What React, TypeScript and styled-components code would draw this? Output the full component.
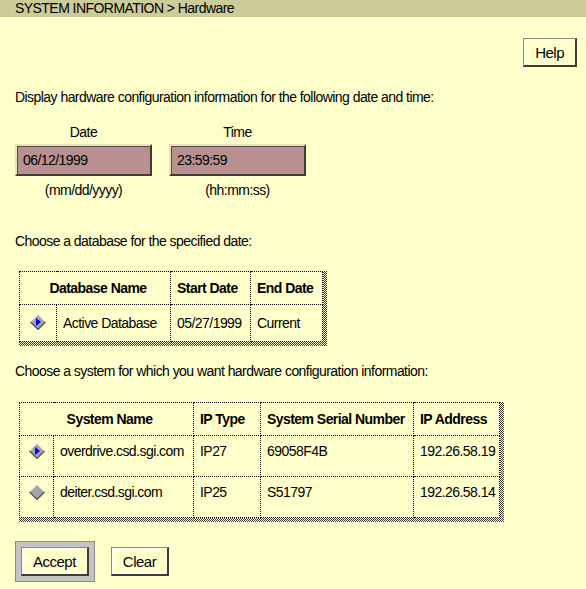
import React from "react";
import styled, { createGlobalStyle } from "styled-components";

const GlobalStyle = createGlobalStyle`
	html, body {
		margin: 0;
		padding: 0;
		background-color: #ffffcc;
	}
	body {
		font-family: "Liberation Sans", Arial, sans-serif;
		font-size: 14px;
		letter-spacing: -0.55px;
		color: #000;
	}
`;

const Page = styled.div`
	width: 586px;
	min-height: 589px;
	background-color: #ffffcc;
`;

const TitleBar = styled.header`
	height: 17px;
	padding-left: 15px;
	background-color: #cccc99;
	font-size: 14px;
	line-height: 17px;
	white-space: nowrap;
`;

const Content = styled.main`
	display: flex;
	flex-direction: column;
	align-items: flex-start;
	padding: 0 9px 0 15px;
`;

const HelpRow = styled.div`
	display: flex;
	justify-content: flex-end;
	align-self: stretch;
	margin-top: 21px;
`;

const Button = styled.button`
	height: 29px;
	padding: 0 11px;
	background-color: #ffffcc;
	border-style: solid;
	border-width: 1px 2px 2px 1px;
	border-color: #8a8a7a #3c3c3c #3c3c3c #8a8a7a;
	box-shadow: inset 1px 1px 0 #ffffff;
	font-family: inherit;
	font-size: 15px;
	letter-spacing: -0.5px;
	color: #000;
	cursor: pointer;
`;

const Prompt = styled.p<{ $top: number }>`
	margin: ${({ $top }) => $top}px 0 0;
	line-height: 18px;
	white-space: nowrap;
`;

const FieldRow = styled.div`
	display: flex;
	gap: 17px;
	margin-top: 17px;
`;

const FieldGroup = styled.div`
	display: flex;
	flex-direction: column;
	align-items: center;
`;

const FieldLabel = styled.label`
	line-height: 18px;
	margin-bottom: 3px;
`;

const FieldInput = styled.input`
	box-sizing: border-box;
	width: 137px;
	height: 32px;
	padding: 0 0 0 6px;
	background-color: #b89090;
	border-style: solid;
	border-width: 2px;
	border-color: #e4e4b4 #3c3c3c #3c3c3c #e4e4b4;
	box-shadow: inset 1px 1px 0 #5a4a4a;
	font-family: inherit;
	font-size: 14px;
	letter-spacing: -0.55px;
	color: #000;
	outline: none;
`;

const FieldHint = styled.span`
	margin-top: 5px;
	line-height: 18px;
`;

const TableFrame = styled.div<{ $top: number }>`
	margin: ${({ $top }) => $top}px 0 0 4px;
	padding: 0 4px 4px 0;
	background: repeating-conic-gradient(#3a3a3a 0% 25%, #ffffcc 0% 50%) 0 0 / 2px 2px;
`;

const Table = styled.table`
	border-collapse: collapse;
	table-layout: fixed;
	background-color: #ffffcc;
	border: 1px dotted #000;
`;

const HeadCell = styled.th<{ $center?: boolean }>`
	height: 32px;
	padding: 0 0 0 6px;
	border: 1px dotted #000;
	font-weight: bold;
	text-align: ${({ $center }) => ($center ? "center" : "left")};
	white-space: nowrap;
`;

const Cell = styled.td<{ $tall?: boolean }>`
	height: ${({ $tall }) => ($tall ? 41 : 37)}px;
	padding: ${({ $tall }) => ($tall ? "7px" : "0")} 0 0 6px;
	border: 1px dotted #000;
	vertical-align: ${({ $tall }) => ($tall ? "top" : "middle")};
	white-space: nowrap;
	box-sizing: border-box;
`;

const RadioCell = styled(Cell)`
	padding-left: 0;
	text-align: center;
`;

const RadioButton = styled.button`
	display: inline-flex;
	padding: 0;
	margin: 0;
	border: none;
	background: none;
	cursor: pointer;
`;

const ButtonRow = styled.div`
	display: flex;
	align-items: center;
	gap: 16px;
	margin-top: 19px;
`;

const DefaultFrame = styled.div`
	display: flex;
	padding: 5px;
	background-color: #c4c4c4;
	border: 1px solid #8c8c8c;
`;

const Diamond = ({ selected }: { selected: boolean }) => (
	<svg width="16" height="16" viewBox="0 0 16 16">
		<polygon points="8,0.5 15.5,8 8,15.5 0.5,8" fill="#a4a4a4" />
		<polyline points="0.5,8 8,0.5 15.5,8" fill="none" stroke="#f0f0f0" strokeWidth="1" />
		<polyline points="15.5,8 8,15.5 0.5,8" fill="none" stroke="#505050" strokeWidth="1.2" />
		{selected && <polygon points="6,4 11,8 6,12" fill="#0000ff" />}
	</svg>
);

const databases = [{ name: "Active Database", start: "05/27/1999", end: "Current" }];

const systems = [
	{ name: "overdrive.csd.sgi.com", type: "IP27", serial: "69058F4B", ip: "192.26.58.19" },
	{ name: "deiter.csd.sgi.com", type: "IP25", serial: "S51797", ip: "192.26.58.14" }
];

const App = () => {
	const [dbIndex, setDbIndex] = React.useState(0);
	const [sysIndex, setSysIndex] = React.useState(0);

	return (
		<Page>
			<GlobalStyle />
			<TitleBar>SYSTEM INFORMATION &gt; Hardware</TitleBar>
			<Content>
				<HelpRow>
					<Button>Help</Button>
				</HelpRow>
				<Prompt $top={21}>Display hardware configuration information for the following date and time:</Prompt>
				<FieldRow>
					<FieldGroup>
						<FieldLabel>Date</FieldLabel>
						<FieldInput defaultValue="06/12/1999" />
						<FieldHint>(mm/dd/yyyy)</FieldHint>
					</FieldGroup>
					<FieldGroup>
						<FieldLabel>Time</FieldLabel>
						<FieldInput defaultValue="23:59:59" />
						<FieldHint>(hh:mm:ss)</FieldHint>
					</FieldGroup>
				</FieldRow>

				<Prompt $top={33}>Choose a database for the specified date:</Prompt>
				<TableFrame $top={21}>
					<Table style={{ width: 304 }}>
						<colgroup>
							<col style={{ width: 37 }} />
							<col style={{ width: 114 }} />
							<col style={{ width: 80 }} />
							<col style={{ width: 72 }} />
						</colgroup>
						<thead>
							<tr>
								<HeadCell colSpan={2} $center>
									Database Name
								</HeadCell>
								<HeadCell>Start Date</HeadCell>
								<HeadCell>End Date</HeadCell>
							</tr>
						</thead>
						<tbody>
							{databases.map((db, i) => (
								<tr key={db.name}>
									<RadioCell>
										<RadioButton onClick={() => setDbIndex(i)}>
											<Diamond selected={dbIndex === i} />
										</RadioButton>
									</RadioCell>
									<Cell>{db.name}</Cell>
									<Cell>{db.start}</Cell>
									<Cell>{db.end}</Cell>
								</tr>
							))}
						</tbody>
					</Table>
				</TableFrame>

				<Prompt $top={16}>Choose a system for which you want hardware configuration information:</Prompt>
				<TableFrame $top={22}>
					<Table style={{ width: 481 }}>
						<colgroup>
							<col style={{ width: 34 }} />
							<col style={{ width: 140 }} />
							<col style={{ width: 67 }} />
							<col style={{ width: 153 }} />
							<col style={{ width: 86 }} />
						</colgroup>
						<thead>
							<tr>
								<HeadCell colSpan={2} $center>
									System Name
								</HeadCell>
								<HeadCell>IP Type</HeadCell>
								<HeadCell>System Serial Number</HeadCell>
								<HeadCell>IP Address</HeadCell>
							</tr>
						</thead>
						<tbody>
							{systems.map((s, i) => (
								<tr key={s.name}>
									<RadioCell $tall>
										<RadioButton onClick={() => setSysIndex(i)}>
											<Diamond selected={sysIndex === i} />
										</RadioButton>
									</RadioCell>
									<Cell $tall>{s.name}</Cell>
									<Cell $tall>{s.type}</Cell>
									<Cell $tall>{s.serial}</Cell>
									<Cell $tall>{s.ip}</Cell>
								</tr>
							))}
						</tbody>
					</Table>
				</TableFrame>

				<ButtonRow>
					<DefaultFrame>
						<Button>Accept</Button>
					</DefaultFrame>
					<Button>Clear</Button>
				</ButtonRow>
			</Content>
		</Page>
	);
};

export default App;
